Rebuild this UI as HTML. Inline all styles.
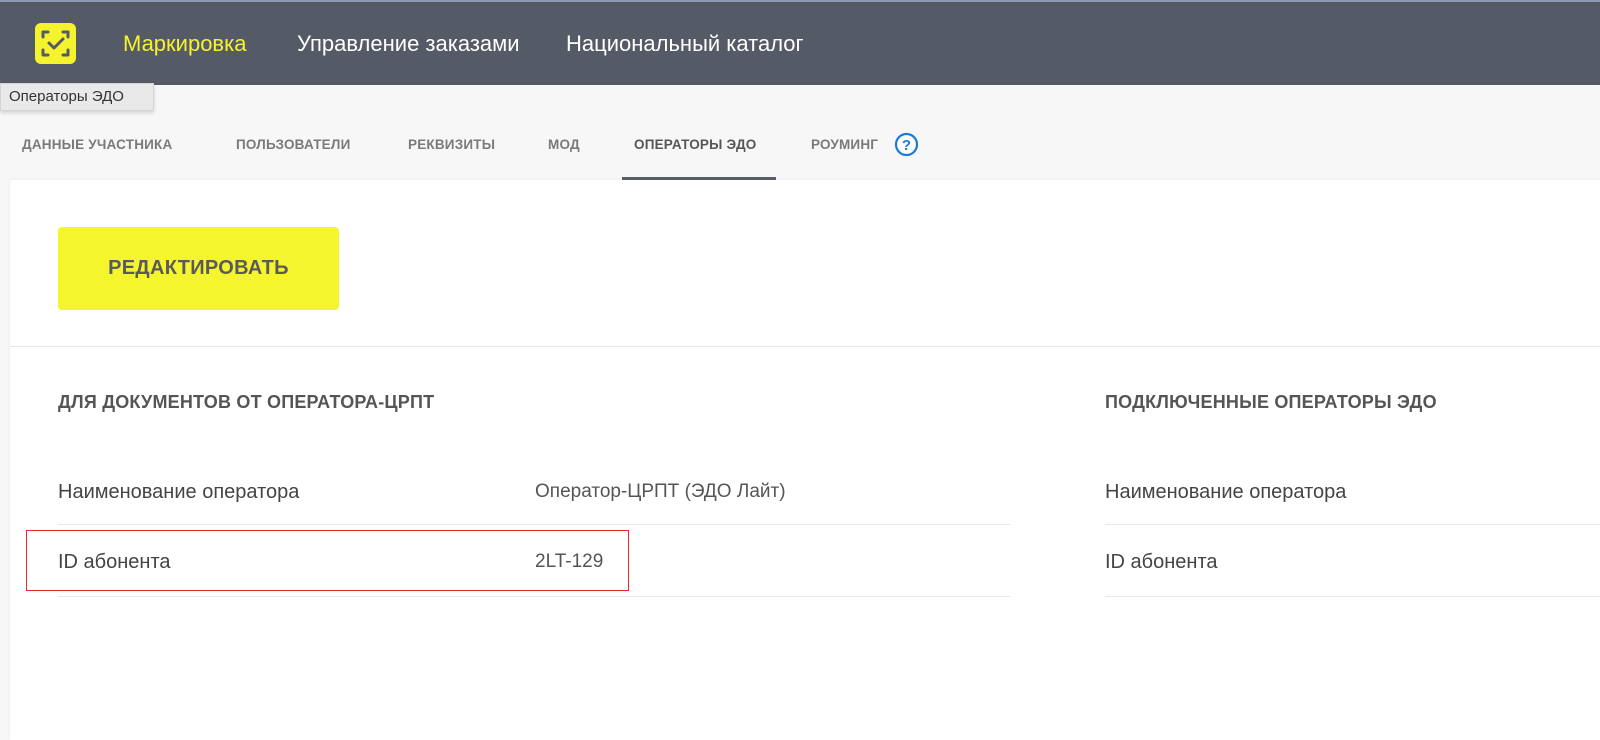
<!DOCTYPE html>
<html><head><meta charset="utf-8"><style>
*{margin:0;padding:0;box-sizing:border-box}
body{width:1600px;height:730px;overflow:hidden;background:#f7f7f7;font-family:"Liberation Sans","DejaVu Sans",sans-serif;position:relative}
.hdr{position:absolute;left:0;top:0;width:1600px;height:85px;background:#555b66;border-top:2px solid #8e9cb3}
.logo{position:absolute;left:35px;top:23px;width:41px;height:41px;background:#f5f32e;border-radius:6px}
.nav{position:absolute;top:31px;font-size:22px;color:#fff}
.tip{position:absolute;left:0;top:83px;width:154px;height:28px;background:#e9e9e9;border:1px solid #d4d4d4;box-shadow:0 2px 4px rgba(0,0,0,.15);font-size:15px;color:#333;padding:4px 0 0 8px}
.tab{position:absolute;top:137px;font-size:13.5px;font-weight:bold;color:#7a7a7a;letter-spacing:.2px}
.card{position:absolute;left:10px;top:180px;width:1600px;height:560px;background:#fff;box-shadow:0 0 3px rgba(0,0,0,.06)}
.btn{position:absolute;left:58px;top:227px;width:281px;height:83px;background:#f5f52e;border-radius:4px;font-weight:bold;font-size:20px;color:#5a5a5a;text-align:center;line-height:83px;letter-spacing:.3px}
.h{position:absolute;top:392px;font-size:18px;font-weight:bold;color:#555;letter-spacing:.2px}
.lbl{position:absolute;font-size:20px;color:#444}
.val{position:absolute;font-size:19px;color:#555}
.line{position:absolute;height:1px;background:#e8e8e8}
</style></head><body>
<div class="hdr"></div>
<div class="logo"><svg width="41" height="41" viewBox="0 0 41 41" fill="none" stroke="#555b66" stroke-width="3" stroke-linecap="round" stroke-linejoin="round"><path d="M8 14V9h5M28 9h5v5M33 27v5h-5M13 32H8v-5"/><path d="M14 20l5 5 9-9"/></svg></div>
<div class="nav" style="left:123px;color:#f5f32e">Маркировка</div>
<div class="nav" style="left:297px">Управление заказами</div>
<div class="nav" style="left:566px">Национальный каталог</div>
<div class="tip">Операторы ЭДО</div>
<div class="tab" style="left:22px">ДАННЫЕ УЧАСТНИКА</div>
<div class="tab" style="left:236px">ПОЛЬЗОВАТЕЛИ</div>
<div class="tab" style="left:408px">РЕКВИЗИТЫ</div>
<div class="tab" style="left:548px">МОД</div>
<div class="tab" style="left:634px;color:#555">ОПЕРАТОРЫ ЭДО</div>
<div class="tab" style="left:811px">РОУМИНГ</div>
<svg style="position:absolute;left:894px;top:132px" width="25" height="25" viewBox="0 0 25 25"><circle cx="12.5" cy="12.5" r="10.5" fill="#fff" stroke="#1e7ad6" stroke-width="2.2"/><text x="12.5" y="18" text-anchor="middle" font-family="Liberation Sans" font-weight="bold" font-size="15" fill="#1e7ad6">?</text></svg>
<div style="position:absolute;left:622px;top:177px;width:154px;height:3px;background:#5a5e66"></div>
<div class="card"></div>
<div class="btn">РЕДАКТИРОВАТЬ</div>
<div class="line" style="left:10px;top:346px;width:1590px"></div>
<div class="h" style="left:58px">ДЛЯ ДОКУМЕНТОВ ОТ ОПЕРАТОРА-ЦРПТ</div>
<div class="h" style="left:1105px">ПОДКЛЮЧЕННЫЕ ОПЕРАТОРЫ ЭДО</div>
<div class="lbl" style="left:58px;top:481px">Наименование оператора</div>
<div class="val" style="left:535px;top:481px">Оператор-ЦРПТ (ЭДО Лайт)</div>
<div class="line" style="left:58px;top:524px;width:952px"></div>
<div class="lbl" style="left:58px;top:551px">ID абонента</div>
<div class="val" style="left:535px;top:551px">2LT-129</div>
<div class="line" style="left:58px;top:596px;width:952px"></div>
<div class="lbl" style="left:1105px;top:481px">Наименование оператора</div>
<div class="line" style="left:1105px;top:524px;width:495px"></div>
<div class="lbl" style="left:1105px;top:551px">ID абонента</div>
<div class="line" style="left:1105px;top:596px;width:495px"></div>
<div style="position:absolute;left:26px;top:530px;width:603px;height:61px;border:1.5px solid #e8262b"></div>
</body></html>
